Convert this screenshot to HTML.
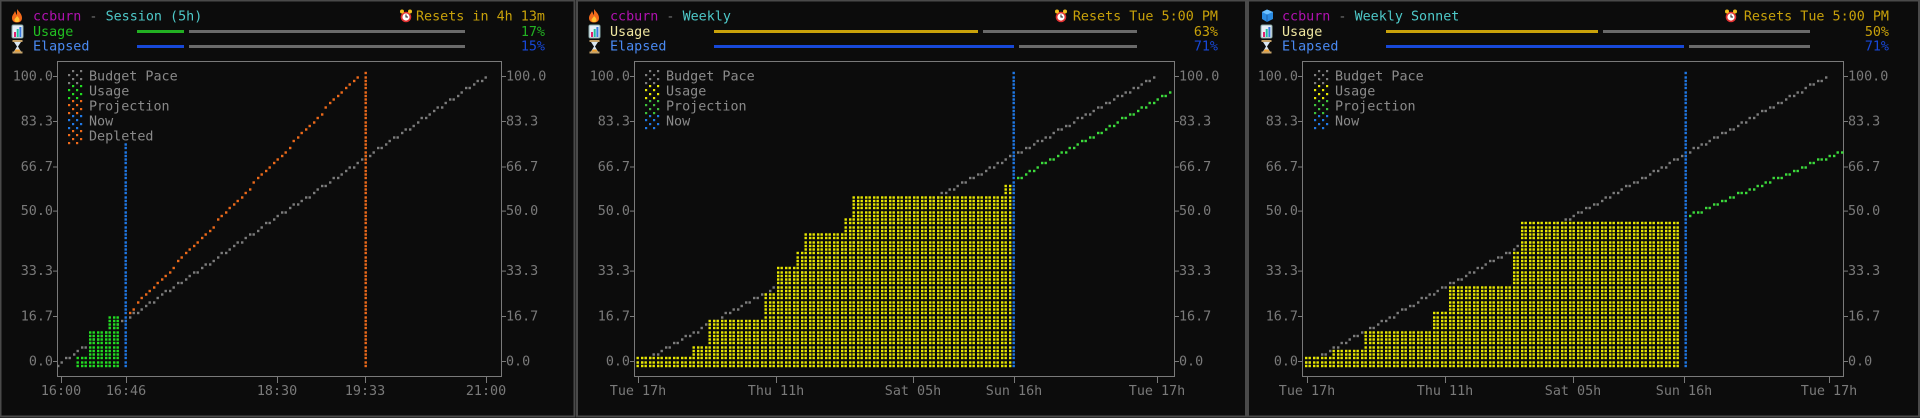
<!DOCTYPE html>
<html><head><meta charset="utf-8"><style>
html,body{margin:0;padding:0;background:#0c0c0c;width:1920px;height:418px;overflow:hidden}
svg{display:block}
text{font-family:"DejaVu Sans Mono","Liberation Mono",monospace;font-size:13.4px;white-space:pre}
</style></head><body>
<svg id="s" xmlns="http://www.w3.org/2000/svg" width="1920" height="418" viewBox="0 0 1920 418">
<rect width="1920" height="418" fill="#0c0c0c"/>
<rect x="0.5" y="0.5" width="574" height="416" fill="none" stroke="#4a4a4a" stroke-width="2"/>
<rect x="577" y="0.5" width="669" height="416" fill="none" stroke="#4a4a4a" stroke-width="2"/>
<rect x="1248" y="0.5" width="671" height="416" fill="none" stroke="#4a4a4a" stroke-width="2"/>
<defs>
<g id="fire"><path d="M5 0 C7 3 10 5 10 9 C10 12 8 13.5 5 13.5 C2 13.5 0 12 0 9 C0 6 2 5 3 2 C4 4 4 5 5 6 C5 4 5 2 5 0Z" fill="#f26a1b"/><path d="M5 7 C6.5 8.5 7.5 9.5 7.5 11 C7.5 12.5 6.5 13 5 13 C3.5 13 2.5 12.5 2.5 11 C2.5 9.5 4 9 5 7Z" fill="#ffc233"/></g>
<g id="chart"><rect x="0" y="0" width="11" height="13" rx="1.5" fill="#e8eef6"/><rect x="0" y="0" width="11" height="13" rx="1.5" fill="none" stroke="#8aa" stroke-width="1"/><rect x="2" y="7" width="2" height="5" fill="#e0206e"/><rect x="4.7" y="4" width="2" height="8" fill="#20c0a0"/><rect x="7.4" y="2" width="2" height="10" fill="#3a7ae0"/></g>
<g id="hour"><rect x="0" y="0" width="10" height="2" fill="#c8a46a"/><rect x="0" y="11.5" width="10" height="2" fill="#c8a46a"/><path d="M1.5 2 L8.5 2 L5.5 6.5 L8.5 11.5 L1.5 11.5 L4.5 6.5Z" fill="#d9e6f2"/><path d="M3 9.5 L7 9.5 L8 11.5 L2 11.5Z" fill="#f0a030"/></g>
<g id="clock"><circle cx="6" cy="8" r="5.3" fill="#e03030"/><circle cx="6" cy="8" r="3.6" fill="#fff"/><path d="M6 5.5 V8 H8" stroke="#222" stroke-width="1" fill="none"/><circle cx="2" cy="2.5" r="2" fill="#f0c020"/><circle cx="10" cy="2.5" r="2" fill="#f0c020"/></g>
<g id="cube"><path d="M1 3 L6 0.5 L12 3 L12 10 L6 13 L1 10Z" fill="#2a8ae0"/><path d="M1 3 L6 5.5 L12 3 L6 0.5Z" fill="#6cc0ff"/><path d="M6 5.5 V13" stroke="#1a5fa8" stroke-width="1"/></g>
</defs>
</svg>
<script>
const NS="http://www.w3.org/2000/svg",S=document.getElementById('s');
function el(n,a,t){const e=document.createElementNS(NS,n);for(const k in a)e.setAttribute(k,a[k]);if(t!==undefined)e.textContent=t;S.appendChild(e);return e}
function R(x,y,w,h,c){el('rect',{x,y,width:w,height:h,fill:c})}
function T(x,y,s,c,anc){el('text',{x,y,fill:c,'text-anchor':anc||'start'},s)}
function U(id,x,y){el('use',{href:'#'+id,x,y})}
const Y=v=>361-v*2.85;
const rows=[];for(let c=0;c<22;c++){for(const o of [1.5,5,8.5,12]){const y=61+c*15+o;if(y<=376)rows.push(y)}}
function snapY(y){let b=rows[0];for(const r of rows)if(Math.abs(r-y)<Math.abs(b-y))b=r;return b}
let seen;
function dot(x,y,c){const cell=Math.floor(x/8)*8,cx=cell+((x-cell)<4?1:4.5),ry=snapY(y);const k=cx+','+ry+','+c;if(seen.has(k))return;seen.add(k);R(cx,ry-1.2,2.4,2.4,c)}
function sline(x1,v1,x2,v2,c){for(let x=x1;x<=x2;x+=4){const v=v1+(v2-v1)*(x-x1)/(x2-x1);dot(x,Y(v),c)}}
function vline(x,y1,y2,c){for(const r of rows)if(r>=y1&&r<=y2)dot(x,r,c)}
function fill(steps,c){for(const [a,b,v] of steps){for(let x=a;x<b;x+=4){for(const r of rows)if(r>=Y(v)-1.5&&r<=366)dot(x,r,c)}}}
const GR='#7d7d7d',GRN='#22dd22',YEL='#e8e800',ORG='#ee6a1a',BLU='#1f78e6';
function legIcon(x,y,c){const pts=[[0,0],[8,0],[4,4],[12,4],[0,8],[8,8],[4,-4],[12,-4]];for(const [dx,dy] of pts)R(x+dx,y+dy,2.2,2.2,c);}
function header(o){
 U(o.icon,o.ix,9);
 el('text',{x:o.tx,y:20.5}).innerHTML='<tspan fill="#b012b0">ccburn</tspan><tspan fill="#7a7a7a"> - </tspan><tspan fill="#4ec9c9">'+o.title+'</tspan>';
 U('clock',o.cx,9);
 T(o.rx,20.5,o.reset,'#c9a20a','end');
 U('chart',o.ix,25);U('hour',o.ix+0.5,40);
 T(o.tx,36,'Usage',o.ulc);T(o.tx,50.5,'Elapsed','#4a8af2');
 R(o.b0,30,o.u1-o.b0,3,o.uc);R(o.u1+5,30,o.b1-o.u1-5,3,'#6a6a6a');
 R(o.b0,45,o.e1-o.b0,3,'#1748d8');R(o.e1+5,45,o.b1-o.e1-5,3,'#6a6a6a');
 T(o.rx,36,o.up,o.upc,'end');T(o.rx,50.5,o.ep,'#1748d8','end');
}
function axes(o){
 el('rect',{x:o.x0+0.5,y:61.5,width:o.x1-o.x0,height:315,fill:'none',stroke:'#7a7a7a','stroke-width':1});
 const ly=[['100.0',76],['83.3',121],['66.7',166.5],['50.0',210.6],['33.3',270.6],['16.7',316],['0.0',361]];
 for(const [s,y] of ly){T(o.x0-4,y+4.5,s,'#7a7a7a','end');R(o.x0-4,y,4,1,'#7a7a7a');R(o.x1+1,y,4,1,'#7a7a7a');T(o.x1+5,y+4.5,s,'#7a7a7a')}
 for(const [s,x] of o.xl){T(x,395,s,'#7a7a7a','middle');R(Math.round(x),377,1,6,'#7a7a7a')}
 o.leg.forEach((l,i)=>{const y=76+i*15;legIcon(o.lx,y-2,l[1]);T(o.lx+21,y+4.5,l[0],'#8a8a8a')});
}
seen=new Set();
header({icon:'fire',ix:12,tx:33,title:'Session (5h)',cx:400,reset:'Resets in 4h 13m',rx:545,ulc:'#22c022',b0:137,u1:184,b1:465,e1:184,uc:'#22b022',up:'17%',upc:'#22b022',ep:'15%'});
axes({x0:57,x1:501,xl:[['16:00',61],['16:46',126],['18:30',277],['19:33',365],['21:00',486]],lx:68,
 leg:[['Budget Pace',GR],['Usage',GRN],['Projection',ORG],['Now',BLU],['Depleted',ORG]]});
sline(57,-1.5,486,100,GR);
fill([[78,90,1],[90,110,10],[110,122,16]],GRN);
sline(131,17,359,100,ORG);
vline(126,144,367,BLU);
vline(365,71,367,ORG);
seen=new Set();
header({icon:'fire',ix:589,tx:610,title:'Weekly',cx:1055,reset:'Resets Tue 5:00 PM',rx:1218,ulc:'#efe6a0',b0:714,u1:978,b1:1137,e1:1014,uc:'#c9a20a',up:'63%',upc:'#c9a20a',ep:'71%'});
axes({x0:634,x1:1174,xl:[['Tue 17h',638],['Thu 11h',776],['Sat 05h',913],['Sun 16h',1014],['Tue 17h',1157]],lx:645,
 leg:[['Budget Pace',GR],['Usage',YEL],['Projection','#3cbf3c'],['Now',BLU]]});
sline(638,-1,1157,100,GR);
fill([[638,692,1],[692,710,5],[710,765,14],[765,778,23],[778,796,33],[796,806,38],[806,845,44],[845,855,50],[855,1004,58],[1004,1012,61]],YEL);
sline(1017,64,1169,94,'#3cdc3c');
vline(1015,72,367,BLU);
seen=new Set();
header({icon:'cube',ix:1261,tx:1282,title:'Weekly Sonnet',cx:1725,reset:'Resets Tue 5:00 PM',rx:1889,ulc:'#efe6a0',b0:1386,u1:1598,b1:1810,e1:1684,uc:'#c9a20a',up:'50%',upc:'#c9a20a',ep:'71%'});
axes({x0:1302,x1:1843,xl:[['Tue 17h',1307],['Thu 11h',1445],['Sat 05h',1573],['Sun 16h',1684],['Tue 17h',1829]],lx:1314,
 leg:[['Budget Pace',GR],['Usage',YEL],['Projection','#3cbf3c'],['Now',BLU]]});
sline(1307,-1,1829,100,GR);
fill([[1307,1335,1],[1335,1365,3],[1365,1433,10],[1433,1451,17],[1451,1515,26],[1515,1522,38],[1522,1680,49]],YEL);
sline(1689,51,1843,74,'#3cdc3c');
vline(1687,72,367,BLU);
</script>
</body></html>
